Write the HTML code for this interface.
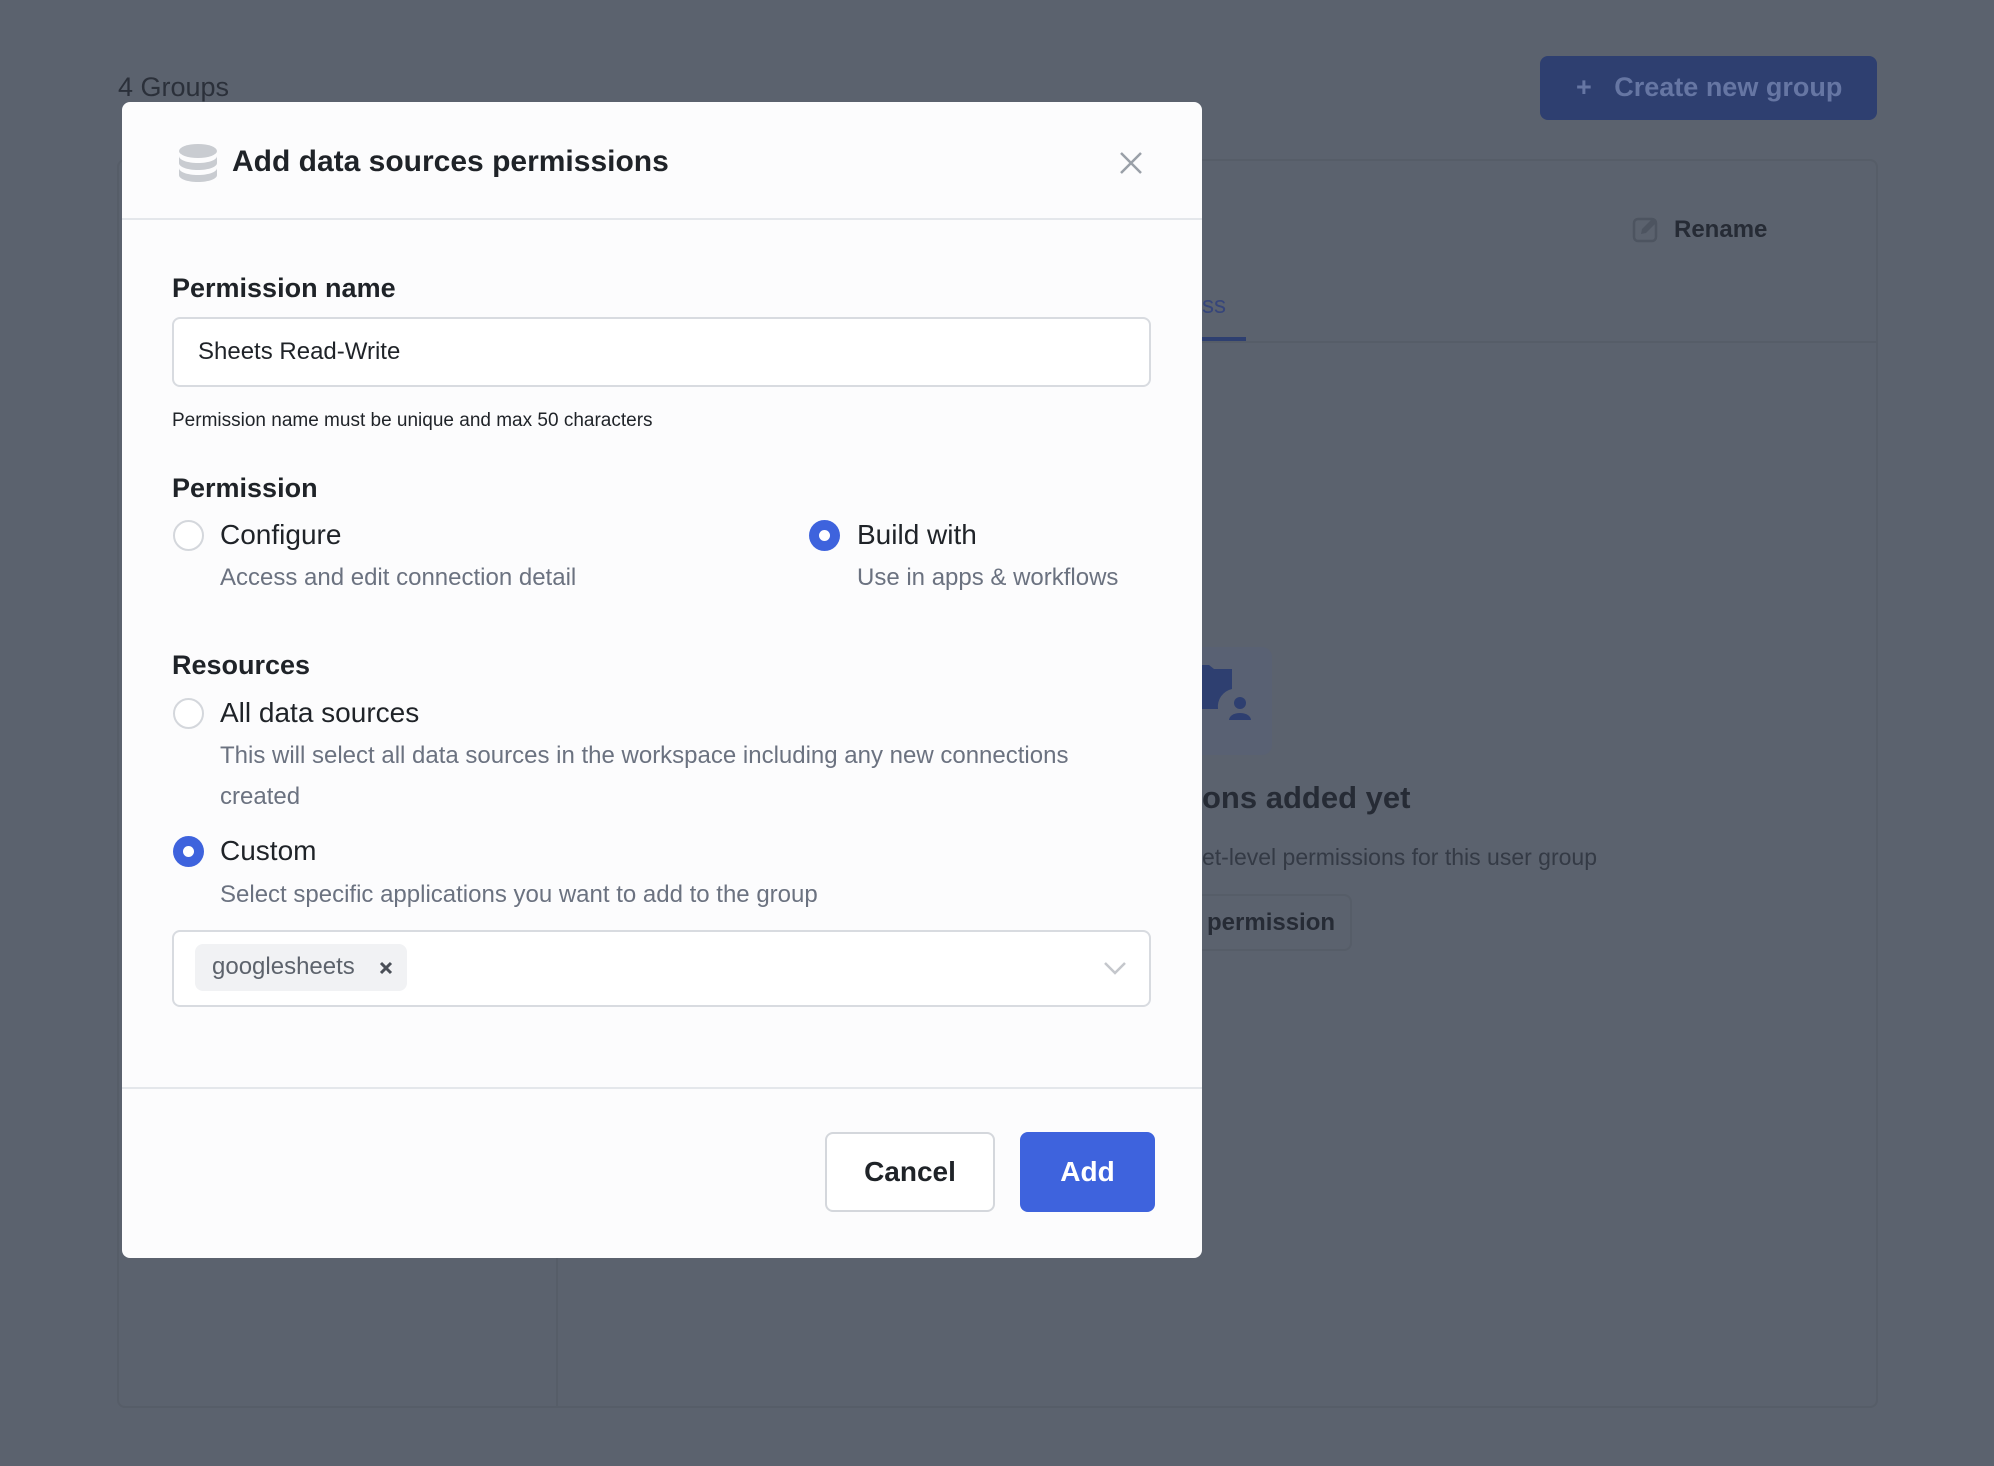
<!DOCTYPE html>
<html><head><meta charset="utf-8"><style>
*{margin:0;padding:0;box-sizing:border-box}
body{width:1994px;height:1466px;background:#5b626e;font-family:"Liberation Sans",sans-serif;position:relative;overflow:hidden}
.a{position:absolute;white-space:nowrap}
.modal{position:absolute;left:122px;top:102px;width:1080px;height:1156px;background:#fcfcfd;border-radius:8px}
.m{position:absolute;white-space:nowrap}
.lbl{font-size:27px;color:#1f2328;font-weight:600}
.opt{font-size:28px;color:#1f2328}
.sub{font-size:24px;color:#6b7280}
.radio{position:absolute;width:31px;height:31px;border-radius:50%;border:2px solid #d4d7dc;background:#fff}
.radio.on{border:none;background:#3e63dd}
.radio.on::after{content:"";position:absolute;left:10px;top:10px;width:11px;height:11px;border-radius:50%;background:#fff}
</style></head><body>
<div class="a" style="left:118px;top:72px;font-size:27px;color:#2b303a">4 Groups</div>
<div class="a" style="left:1540px;top:56px;width:337px;height:64px;background:#2e3f70;border-radius:8px"></div>
<div class="a" style="left:1576px;top:72px;font-size:27px;color:#6676a3;font-weight:bold">+&nbsp;&nbsp; Create new group</div>
<div class="a" style="left:117px;top:159px;width:1761px;height:1249px;border:2px solid #565d68;border-radius:8px"></div>
<div class="a" style="left:556px;top:1258px;width:2px;height:150px;background:#565d68"></div>
<div class="a" style="left:1202px;top:341px;width:676px;height:2px;background:#565d68"></div>
<div class="a" style="left:1202px;top:337px;width:44px;height:4px;background:#2e3f70"></div>
<div class="a" style="left:1202px;top:292px;font-size:24px;color:#36457a">ss</div>
<svg class="a" style="left:1632px;top:215px" width="28" height="28" viewBox="0 0 28 28"><rect x="2" y="4" width="22" height="22" rx="4" fill="none" stroke="#4d5460" stroke-width="2.5"/><path d="M9 19 L10 14 L20 4 L24 8 L14 18 Z" fill="#4d5460"/></svg>
<div class="a" style="left:1674px;top:216px;font-size:24px;font-weight:bold;color:#262b35">Rename</div>
<div class="a" style="left:1160px;top:647px;width:112px;height:108px;background:#596173;border-radius:10px"></div>
<svg class="a" style="left:1195px;top:665px" width="60" height="60" viewBox="0 0 60 60"><path d="M0 0h14l5 4h18v20a18 18 0 0 0-14 20H0z" fill="#2e3f70"/><circle cx="45" cy="38" r="6" fill="#2e3f70"/><path d="M34 55a11 7 0 0 1 22 0z" fill="#2e3f70"/></svg>
<div class="a" style="left:1202px;top:780px;font-size:31px;font-weight:bold;color:#262b35">ons added yet</div>
<div class="a" style="left:1202px;top:844px;font-size:23px;color:#343a45">et-level permissions for this user group</div>
<div class="a" style="left:1150px;top:894px;width:202px;height:57px;border:2px solid #565d68;border-radius:8px"></div>
<div class="a" style="left:1207px;top:909px;font-size:24px;font-weight:bold;color:#262b35">permission</div>

<div class="modal">
<svg class="m" style="left:56px;top:42px" width="40" height="38" viewBox="0 0 40 38"><ellipse cx="20" cy="7" rx="19" ry="7" fill="#c9ccd1"/><path d="M1 12c0 4 8.5 7 19 7s19-3 19-7v7c0 4-8.5 7-19 7S1 23 1 19z" fill="#c9ccd1"/><path d="M1 24c0 4 8.5 7 19 7s19-3 19-7v7c0 4-8.5 7-19 7S1 35 1 31z" fill="#c9ccd1"/></svg>
<div class="m" style="left:110px;top:43px;font-size:30px;font-weight:600;color:#1f2328">Add data sources permissions</div>
<svg class="m" style="left:997px;top:49px" width="24" height="24" viewBox="0 0 24 24"><path d="M2 2L22 22M22 2L2 22" stroke="#9aa0a8" stroke-width="2.5"/></svg>
<div class="m" style="left:0;top:116px;width:1080px;height:2px;background:#e4e7eb"></div>
<div class="m lbl" style="left:50px;top:171px">Permission name</div>
<div class="m" style="left:50px;top:215px;width:979px;height:70px;border:2px solid #d8dbe0;border-radius:8px;background:#fff"></div>
<div class="m" style="left:76px;top:236px;font-size:24px;color:#1f2328">Sheets Read-Write</div>
<div class="m" style="left:50px;top:308px;font-size:19px;color:#1f2328">Permission name must be unique and max 50 characters</div>
<div class="m lbl" style="left:50px;top:371px">Permission</div>
<div class="radio" style="left:51px;top:418px"></div>
<div class="m opt" style="left:98px;top:417px">Configure</div>
<div class="m sub" style="left:98px;top:462px">Access and edit connection detail</div>
<div class="radio on" style="left:687px;top:418px"></div>
<div class="m opt" style="left:735px;top:417px">Build with</div>
<div class="m sub" style="left:735px;top:462px">Use in apps &amp; workflows</div>
<div class="m lbl" style="left:50px;top:548px">Resources</div>
<div class="radio" style="left:51px;top:596px"></div>
<div class="m opt" style="left:98px;top:595px">All data sources</div>
<div class="m sub" style="left:98px;top:640px">This will select all data sources in the workspace including any new connections</div>
<div class="m sub" style="left:98px;top:681px">created</div>
<div class="radio on" style="left:51px;top:734px"></div>
<div class="m opt" style="left:98px;top:733px">Custom</div>
<div class="m sub" style="left:98px;top:779px">Select specific applications you want to add to the group</div>
<div class="m" style="left:50px;top:828px;width:979px;height:77px;border:2px solid #d8dbe0;border-radius:8px;background:#fff"></div>
<div class="m" style="left:73px;top:842px;width:212px;height:47px;background:#f1f2f4;border-radius:8px"></div>
<div class="m" style="left:90px;top:851px;font-size:24px;color:#5d636c">googlesheets</div>
<svg class="m" style="left:257px;top:859px" width="14" height="14" viewBox="0 0 14 14"><path d="M2 2L12 12M12 2L2 12" stroke="#4a4f57" stroke-width="3"/></svg>
<svg class="m" style="left:981px;top:858px" width="24" height="16" viewBox="0 0 24 16"><path d="M2 3L12 13L22 3" fill="none" stroke="#c4c7cc" stroke-width="2.5"/></svg>
<div class="m" style="left:0;top:985px;width:1080px;height:2px;background:#e4e7eb"></div>
<div class="m" style="left:703px;top:1030px;width:170px;height:80px;border:2px solid #d4d7dc;border-radius:8px;background:#fff"></div>
<div class="m" style="left:703px;top:1054px;width:170px;text-align:center;font-size:28px;font-weight:600;color:#1f2328">Cancel</div>
<div class="m" style="left:898px;top:1030px;width:135px;height:80px;border-radius:8px;background:#3e63dd"></div>
<div class="m" style="left:898px;top:1054px;width:135px;text-align:center;font-size:28px;font-weight:600;color:#fff">Add</div>
</div>
</body></html>
